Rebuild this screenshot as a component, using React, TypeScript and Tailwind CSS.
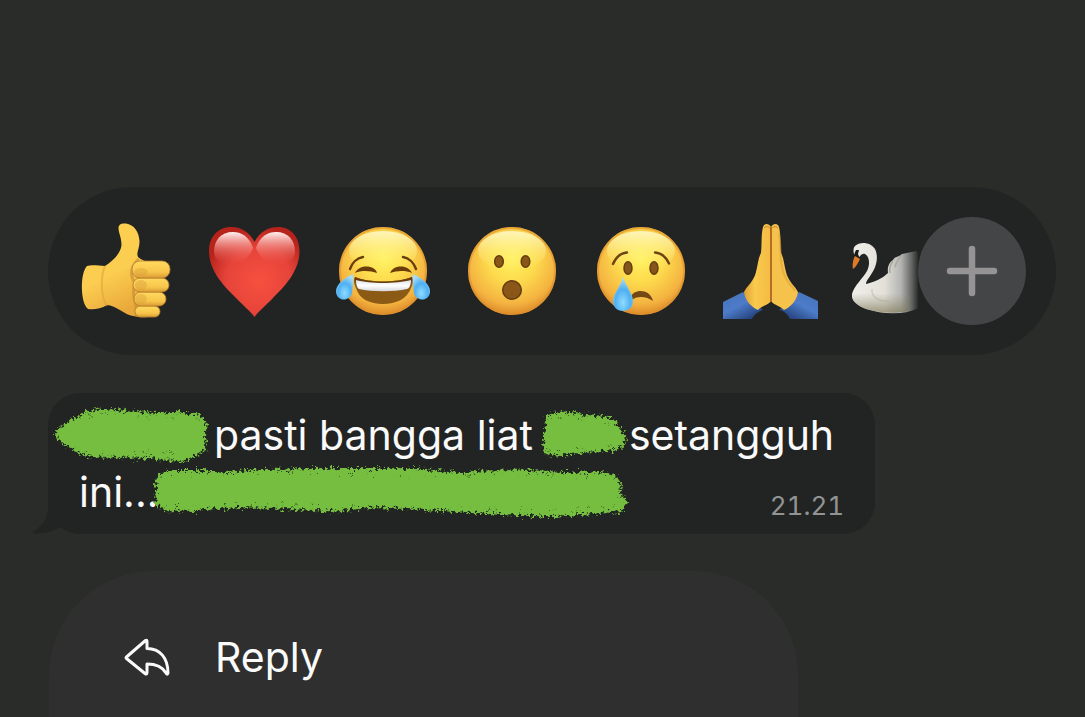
import type { ReactNode } from "react";

function FaceBase({ id }: { id: string }) {
  return (
    <>
      <defs>
        <radialGradient id={id} cx="0.5" cy="0.36" r="0.66">
          <stop offset="0" stopColor="#fff15f" />
          <stop offset="0.4" stopColor="#fddb4d" />
          <stop offset="0.78" stopColor="#f4b340" />
          <stop offset="1" stopColor="#d88326" />
        </radialGradient>
        <linearGradient id={`${id}-shine`} x1="0" y1="0" x2="0" y2="1">
          <stop offset="0" stopColor="#fffbd0" stopOpacity="0.85" />
          <stop offset="1" stopColor="#fff46b" stopOpacity="0" />
        </linearGradient>
      </defs>
      <circle cx="47" cy="48" r="44" fill={`url(#${id})`} />
      <circle cx="47" cy="48" r="43" fill="none" stroke="#e08f2c" strokeWidth="2" opacity="0.6" />
      <ellipse cx="47" cy="28" rx="34" ry="20" fill={`url(#${id}-shine)`} />
    </>
  );
}

function TearFill({ id }: { id: string }) {
  return (
    <radialGradient id={id} cx="0.5" cy="0.75" r="0.7">
      <stop offset="0" stopColor="#8fdcff" />
      <stop offset="0.55" stopColor="#4fb0f2" />
      <stop offset="1" stopColor="#a9dcf7" />
    </radialGradient>
  );
}

function ThumbsUp() {
  return (
    <>
      <defs>
        <linearGradient id="thumb" x1="0" y1="0" x2="0.4" y2="1">
          <stop offset="0" stopColor="#ffd04f" />
          <stop offset="0.6" stopColor="#fbcd50" />
          <stop offset="1" stopColor="#e9a93a" />
        </linearGradient>
        <linearGradient id="finger" x1="0" y1="0" x2="0" y2="1">
          <stop offset="0" stopColor="#ffd95e" />
          <stop offset="0.65" stopColor="#f7c64b" />
          <stop offset="1" stopColor="#d99a35" />
        </linearGradient>
      </defs>
      <path d="M40.500 5C40.500 1 44 0 48 0.500C56 1.500 61 9 61.500 18C61.500 26 58 30 60 34C63 37 68 38 72 40L78 80L70 94C62 95 52 93 47 90C40 86 34 82 29 82C23 86 15 87 10 86C2 80 2 50 9 43C14 41.500 21 43 27 43C35 38 43 30 43.500 22C43.500 14 40.500 10 40.500 5Z" fill="url(#thumb)" />
      <path d="M27 43C23 51 22 73 29 83" fill="none" stroke="#dca03b" strokeWidth="2" opacity="0.55" />
      <path d="M61 36C53 42 51 52 57 60C54 67 56 76 58 82L58 93" fill="none" stroke="#c48833" strokeWidth="3" opacity="0.6" />
      <g fill="url(#finger)" stroke="#b87e2c" strokeWidth="0.8">
        <rect x="57" y="83" width="25" height="11" rx="5.5" />
        <rect x="56" y="69" width="32" height="14" rx="7" />
        <rect x="55" y="55" width="36" height="14" rx="7" />
        <rect x="54" y="38" width="38" height="17" rx="8" />
      </g>
      <g fill="#d79d3a" opacity="0.4">
        <ellipse cx="63" cy="49" rx="7" ry="4" />
        <ellipse cx="63" cy="62" rx="6" ry="5" />
        <ellipse cx="63" cy="76" rx="6" ry="5" />
      </g>
    </>
  );
}

function Heart() {
  return (
    <>
      <defs>
        <radialGradient id="heart" cx="0.55" cy="0.6" r="0.6">
          <stop offset="0" stopColor="#f7503f" />
          <stop offset="0.6" stopColor="#e6443a" />
          <stop offset="1" stopColor="#b5231b" />
        </radialGradient>
        <linearGradient id="heart-shine" x1="0" y1="0" x2="0" y2="1">
          <stop offset="0" stopColor="#fff0f0" />
          <stop offset="0.35" stopColor="#f6a09b" stopOpacity="0.8" />
          <stop offset="1" stopColor="#ee4a40" stopOpacity="0" />
        </linearGradient>
      </defs>
      <path d="M47.500 19C42 8 33 4 24 4C11 4 2 14 2 28C2 48 17 63 29 75C38 84 43 88 47.500 94C52 88 57 84 66 75C78 63 92.500 48 92.500 28C92.500 14 84 4 71 4C62 4 53 8 47.500 19Z" fill="url(#heart)" />
      <path d="M46 25C42 13 34 9 26 9C14 9 7 17 7 29C9 47 38 47 46 25Z" fill="url(#heart-shine)" />
      <path d="M49 25C53 13 61 9 69 9C81 9 88 17 88 29C86 47 57 47 49 25Z" fill="url(#heart-shine)" />
    </>
  );
}

function Joy() {
  return (
    <>
      <FaceBase id="joy" />
      <defs>
        <TearFill id="joy-tear" />
        <linearGradient id="teeth" x1="0" y1="0" x2="0" y2="1">
          <stop offset="0" stopColor="#dcdfe6" />
          <stop offset="0.5" stopColor="#ffffff" />
          <stop offset="1" stopColor="#d5d5dc" />
        </linearGradient>
      </defs>
      <g fill="none" stroke="#6b3d0b" strokeWidth="2.400" strokeLinecap="round">
        <path d="M14 46C16 40 21 35 27 34" />
        <path d="M67 34C73 35 78 40 80 46" />
      </g>
      <path d="M19 50C21 46 25 43.500 30 43.500C36 43.500 40 46 41 50C35 48 26 47 19 50Z" fill="#6b3d0b" />
      <path d="M54 50C56 46 59 43.500 65 43.500C70 43.500 74 46 76 50C69 47 60 48 54 50Z" fill="#6b3d0b" />
      <path d="M19 54C33 60 61 60 76 54C78 56 77 61 75 65C71 76 60 81 47 81C34 81 23 76 20 65C18 61 17 56 19 54Z" fill="#8b5a14" />
      <path d="M19 54C33 60 61 60 76 54L76 58C60 62 33 62 19 58Z" fill="#6b3d0b" />
      <path d="M20 57C34 61 60 61 75 57C75 62 73 66 71 66C58 69 36 69 23 66C21 65 20 61 20 57Z" fill="url(#teeth)" />
      <path d="M17 51C9 55 0 61 0 68C0 79 14 79 16 70C17 64 18 57 17 51Z" fill="url(#joy-tear)" />
      <path d="M77 51C85 55 94 61 94 68C94 79 80 79 78 70C77 64 76 57 77 51Z" fill="url(#joy-tear)" />
    </>
  );
}

function Surprised() {
  return (
    <>
      <FaceBase id="wow" />
      <g fill="#8a5719" stroke="#643d10" strokeWidth="1.500">
        <ellipse cx="34" cy="38.500" rx="4.300" ry="5.800" />
        <ellipse cx="60.500" cy="38.500" rx="4.300" ry="5.800" />
        <ellipse cx="47" cy="67" rx="9.300" ry="9.300" />
      </g>
    </>
  );
}

function Crying() {
  return (
    <>
      <FaceBase id="cry" />
      <defs>
        <TearFill id="cry-tear" />
      </defs>
      <g fill="none" stroke="#704412" strokeWidth="2.400" strokeLinecap="round">
        <path d="M19 41C22 34 27 30 33 29.500" />
        <path d="M61 29.500C67 30 72 34 75 40.500" />
      </g>
      <g fill="#85551b" stroke="#654013" strokeWidth="1.500">
        <ellipse cx="34" cy="45" rx="4" ry="6.300" />
        <ellipse cx="60" cy="45" rx="4" ry="6.300" />
      </g>
      <path d="M37 74C39 66 56 65 59 78C57 77 54 74 47 74C43 74 40 75 38 77Z" fill="#744814" />
      <path d="M29 54C32 63 39 71 39 78C39 84 35 88 29 88C23 88 19 84 19 78C19 71 27 63 29 54Z" fill="url(#cry-tear)" />
    </>
  );
}

function Pray() {
  return (
    <>
      <defs>
        <linearGradient id="palm" x1="0" y1="0" x2="1" y2="0">
          <stop offset="0" stopColor="#dc9f35" />
          <stop offset="0.4" stopColor="#fac94d" />
          <stop offset="1" stopColor="#f3bb45" />
        </linearGradient>
        <linearGradient id="sleeve-left" x1="0" y1="0" x2="0.8" y2="1">
          <stop offset="0" stopColor="#4470b8" />
          <stop offset="0.5" stopColor="#4d7cc9" />
          <stop offset="1" stopColor="#203b73" />
        </linearGradient>
        <linearGradient id="sleeve-right" x1="1" y1="0" x2="0.2" y2="1">
          <stop offset="0" stopColor="#4470b8" />
          <stop offset="0.5" stopColor="#4d7cc9" />
          <stop offset="1" stopColor="#203b73" />
        </linearGradient>
      </defs>
      <path d="M0 79L20 69L40 87C34 89 31 92 29 96L0 96Z" fill="url(#sleeve-left)" />
      <path d="M95 78L76 69L56 87C62 88 65 92 67 96L95 96Z" fill="url(#sleeve-right)" />
      <path d="M48 4C46 0 41 0 40 4C38 12 39 22 38 30C35 35 35 42 33 49C31 58 24 63 21 69C22 77 28 84 35 87C38 83 46 82 48 78Z" fill="url(#palm)" />
      <path d="M48 4C50 0 55 0 56 4C58 12 57 22 58 30C61 35 61 42 63 49C65 58 72 63 75 69C74 77 68 84 61 87C58 83 50 82 48 78Z" fill="#f5c34b" />
      <path d="M48 4V79" stroke="#a65a1c" strokeWidth="1.600" />
      <path d="M41 5C43 3 45 3 47 5M49 5C51 3 53 3 55 5" fill="none" stroke="#d79b3e" strokeWidth="1.200" />
      <path d="M56 10C58 24 57 34 59 44C61 56 67 61 72 68" fill="none" stroke="#d99e38" strokeWidth="2" opacity="0.5" />
    </>
  );
}

function Swan() {
  return (
    <>
      <defs>
        <linearGradient id="swan" gradientUnits="userSpaceOnUse" x1="0" y1="0" x2="72" y2="0">
          <stop offset="0" stopColor="#efeee9" />
          <stop offset="0.45" stopColor="#e2e0d8" />
          <stop offset="0.68" stopColor="#b4b5b2" />
          <stop offset="0.83" stopColor="#626462" />
          <stop offset="0.93" stopColor="#222423" />
        </linearGradient>
        <linearGradient id="swan-shade" gradientUnits="userSpaceOnUse" x1="0" y1="70" x2="0" y2="91">
          <stop offset="0" stopColor="#8a8468" stopOpacity="0" />
          <stop offset="1" stopColor="#77704f" stopOpacity="0.7" />
        </linearGradient>
      </defs>
      <path d="M36 50C35 43 38 39 41 37C43 33 47 34 50 31C55 30 59 29 65 28L76 60L68 84C55 92 33 92 14 86C4 82-1 77 0 71C2 63 11 55 15 48C18 42 18 34 13 31C9 30 8 34 5 36C2 34 0 26 3 23C8 18 19 19 23 26C27 34 24 44 20 50C17 55 14 58 14 61C22 59 30 56 36 50Z" fill="url(#swan)" />
      <path d="M0 71H58L56 88C42 91 28 90 14 86C4 82-1 77 0 71Z" fill="url(#swan-shade)" />
      <path d="M20 66C19 74 27 79 37 78" fill="none" stroke="#a9a798" strokeWidth="1.500" opacity="0.4" />
      <path d="M41 38C38 42 37 46 38 50M50 32C46 36 44 40 43 44" fill="none" stroke="#aaa79f" strokeWidth="1.500" />
      <path d="M4 27L7 27L6 31L8 36L4 36L1 39C1 35 2 31 4 27Z" fill="#1d1b19" />
      <path d="M3 33L8 36C6 40 4 44 1 46C0 42 1 36 3 33Z" fill="#dd7b2b" />
    </>
  );
}

const reactions: { name: string; art: ReactNode }[] = [
  { name: "Thumbs up", art: <ThumbsUp /> },
  { name: "Red heart", art: <Heart /> },
  { name: "Tears of joy", art: <Joy /> },
  { name: "Surprised", art: <Surprised /> },
  { name: "Crying", art: <Crying /> },
  { name: "Folded hands", art: <Pray /> },
  { name: "Swan", art: <Swan /> },
];

function ReactionBar() {
  return (
    <section aria-label="Reactions" className="mr-[29px] ml-12 flex h-42 items-center rounded-full bg-[#222423] px-[30px]">
      <ul className="flex min-w-0 flex-1 gap-[33px] overflow-hidden">
        {reactions.map((reaction) => (
          <li key={reaction.name} className="shrink-0">
            <button type="button" aria-label={reaction.name} className="block">
              <svg viewBox="0 0 96 96" className="size-24" aria-hidden="true">
                {reaction.art}
              </svg>
            </button>
          </li>
        ))}
      </ul>
      <button type="button" aria-label="More reactions" className="flex size-27 shrink-0 items-center justify-center rounded-full bg-[#444547]">
        <svg viewBox="0 0 52 52" className="size-13" fill="none" stroke="#969395" strokeWidth="6.500" strokeLinecap="round" aria-hidden="true">
          <path d="M26 4V48M4 26H48" />
        </svg>
      </button>
    </section>
  );
}

function Brush({ viewBox, className, path, specks }: { viewBox: string; className: string; path: string; specks: string }) {
  return (
    <svg viewBox={viewBox} className={className} aria-hidden="true">
      <g filter="url(#rough)">
        <path d={path} fill="#74be40" />
        <path d={path} fill="none" stroke="#74be40" strokeWidth="2" strokeDasharray="2 2 4 1 1 3" />
        <path d={specks} stroke="#2f5520" strokeWidth="1" strokeDasharray="1 9 2 17 1 5 1 23" fill="none" />
      </g>
    </svg>
  );
}

function Message() {
  return (
    <article className="relative ml-12 w-fit rounded-[32px] bg-[#222423] pt-[14px] pr-[41px] pb-[13px] pl-[31px]">
      <svg viewBox="0 0 34 42" className="absolute bottom-0 -left-4 h-[42px] w-[34px]" aria-hidden="true">
        <path d="M16 0V16C16 27 9 35 1 40C-1 42 5 42 10 41C17 41 24 38 29 34L34 0Z" fill="#222423" />
      </svg>
      <svg className="absolute size-0" aria-hidden="true">
        <filter id="rough" x="-5%" y="-15%" width="110%" height="130%">
          <feTurbulence type="fractalNoise" baseFrequency="0.35" numOctaves="3" seed="4" result="noise" />
          <feDisplacementMap in="SourceGraphic" in2="noise" scale="11" xChannelSelector="R" yChannelSelector="G" />
        </filter>
      </svg>
      <p className="relative flex h-14 items-center text-[41px] leading-14 whitespace-pre text-[#fafafa]">
        <Brush
          viewBox="0 0 156 56"
          className="-ml-[26px] h-14 w-[156px] shrink-0"
          path="M2 27L10 18L22 11L36 4L60 3L84 5L106 7L124 5L148 9L154 17L151 28L154 35L150 44L138 51L126 54L96 51L64 50L32 49L20 42L10 36Z"
          specks="M26 11L50 7L95 10L145 12M22 44L55 46L95 45L140 45M86 48L120 46L94 44"
        />
        <span className="ml-[5px]">pasti bangga liat</span>
        <Brush
          viewBox="0 0 88 56"
          className="ml-2 h-14 w-22 shrink-0"
          path="M6 8L22 5L42 8L62 10L74 13L78 22L85 31L82 39L72 43L44 45L20 48L4 47L3 31Z"
          specks="M8 12L30 10L72 18M8 44L35 43L76 38"
        />
        <span>setangguh</span>
      </p>
      <div className="relative flex h-[58px] items-center text-[41px] leading-14 text-[#fafafa]">
        <p className="flex items-center">
          ini...
          <Brush
            viewBox="0 -1 478 56"
            className="-ml-[6px] h-14 w-[478px] shrink-0"
            path="M6 10L14 6L50 6L72 8L108 5L160 4L212 4L260 4L308 8L360 5L410 8L448 8L462 11L468 20L466 28L474 37L468 46L440 48L400 51L350 49L300 46L254 43L218 42L178 46L130 43L86 42L48 44L42 46L10 45L3 37L4 25L2 17Z"
            specks="M10 12L60 10L150 8L270 12L380 10L460 14M12 41L80 38L200 40L310 42L390 46L464 40M440 44L468 38L456 20"
          />
        </p>
        <time className="mt-7 -mr-[10px] ml-auto text-[26px] leading-8 text-[#929493] tabular-nums">21.21</time>
      </div>
    </article>
  );
}

function ActionMenu() {
  return (
    <nav aria-label="Message actions" className="mt-[37px] ml-[49px] w-[69%] flex-1 rounded-t-[104px] bg-[#2f2f2f] pt-[58px]">
      <button type="button" className="flex w-full items-center gap-[43px] pl-[75px] text-left text-[41px] leading-14 text-[#fafafa]">
        <svg viewBox="0 0 48 40" className="h-10 w-12" fill="none" stroke="currentColor" strokeWidth="3" strokeLinecap="round" strokeLinejoin="round" aria-hidden="true">
          <path d="M2.500 20L21.500 3.500Q23 2.500 23 4.500V11.500C36 11.500 44 21 44 36Q43.500 38.500 42 36C38 29 32 27 23 27V35.500Q23 38 21 36.500L2.500 21.500Q1.500 20.800 2.500 20Z" />
        </svg>
        Reply
      </button>
    </nav>
  );
}

export default function App() {
  return (
    <main className="flex min-h-screen flex-col bg-[#2a2c29] pt-[187px] font-['Inter','Noto_Sans',sans-serif]">
      <ReactionBar />
      <div className="mt-[38px]">
        <Message />
      </div>
      <ActionMenu />
    </main>
  );
}
